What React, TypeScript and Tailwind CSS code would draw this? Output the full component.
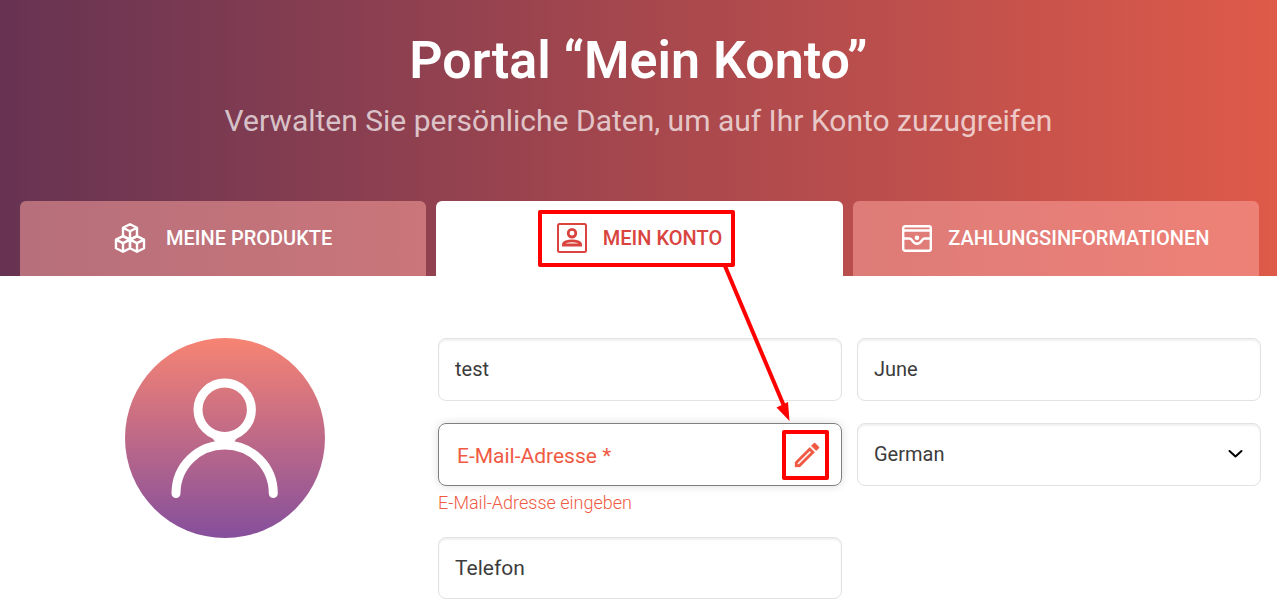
import React, { useState } from 'react';

const BoxesIcon: React.FC = () => (
    <svg width="32" height="32" viewBox="0 0 32 32" fill="none" stroke="currentColor" strokeWidth="2.4" strokeLinejoin="round" aria-hidden="true">
        <path d="M16 2.200 23 5.700v8.400l-7 3.500-7-3.500V5.700zM9 5.700l7 3.500 7-3.500M16 9.200v8.400" />
        <path d="M9 14.100l7 3.500v8.600l-7 3.500-7-3.500v-8.600zM2 17.600l7 3.500 7-3.500M9 21.100v8.600" />
        <path d="M23 14.100l7 3.500v8.600l-7 3.500-7-3.500v-8.600zM16 17.600l7 3.500 7-3.500M23 21.100v8.600" />
    </svg>
);

const AccountIcon: React.FC = () => (
    <svg width="30" height="30" viewBox="0 0 30 30" fill="none" stroke="currentColor" strokeWidth="2" aria-hidden="true">
        <rect x="1" y="1" width="28" height="28" rx="1.5" />
        <circle cx="15" cy="10.2" r="3.8" strokeWidth="2.8" />
        <path d="M6.4 22v-.5c0-2.200 4.300-3.700 8.600-3.700s8.600 1.500 8.600 3.700v.5z" strokeWidth="2.800" />
    </svg>
);

const WalletIcon: React.FC = () => (
    <svg width="30" height="30" viewBox="0 0 30 30" fill="none" stroke="currentColor" strokeWidth="2.400" aria-hidden="true">
        <rect x="1.200" y="3.200" width="27.600" height="24.600" rx="2" />
        <path d="M1 7.500h28M1 15.500h6.500c1.500 0 2.200 1 3 2.300 1 1.700 2.500 2.900 4.500 2.900s3.500-1.200 4.500-2.900c.8-1.300 1.500-2.300 3-2.300H29" />
        <circle cx="15" cy="14.800" r="2.300" fill="currentColor" stroke="none" />
    </svg>
);

const PencilIcon: React.FC = () => (
    <svg width="32" height="32" viewBox="0 0 24 24" fill="currentColor" stroke="currentColor" strokeWidth="0.2" aria-hidden="true">
        <path d="m14.060 9.020.92.920L5.920 19H5v-.92l9.060-9.060M17.660 3c-.25 0-.51.100-.7.290l-1.830 1.830 3.750 3.750 1.830-1.830a.996.996 0 0 0 0-1.410l-2.340-2.340c-.2-.2-.45-.290-.71-.290zm-3.600 3.190L3 17.250V21h3.750L17.810 9.940l-3.750-3.750z" />
    </svg>
);

const Avatar: React.FC = () => (
    <svg width="200" height="200" viewBox="0 0 200 200" fill="none" role="img" aria-label="Avatar">
        <defs>
            <linearGradient id="avatar" x1="0" y1="0" x2="0" y2="1">
                <stop offset="0" stopColor="#f78473" />
                <stop offset="1" stopColor="#854f9c" />
            </linearGradient>
        </defs>
        <circle cx="100" cy="100" r="100" fill="url(#avatar)" />
        <g stroke="#fff" strokeWidth="9" strokeLinecap="round">
            <circle cx="99.700" cy="71.700" r="26.700" />
            <path d="M51 155.500C51 128 73 107 99.700 107s48.600 21 48.600 48.500" />
        </g>
        <path d="M84 95.500h31.400l-6 8H90z" fill="#fff" />
    </svg>
);

// Red frame and arrow that lead from the active tab to the edit button
const TabMarker: React.FC = () => (
    <>
        <span className="absolute -top-[13px] -right-[13px] -bottom-[14px] -left-[19px] rounded-xs border-4 border-[#ff0000]" />
        <svg className="pointer-events-none absolute top-full left-full z-10 overflow-visible" width="70" height="170" viewBox="0 0 70 170" aria-hidden="true">
            <path d="M3 13 62 153" stroke="#ff0000" strokeWidth="4" />
            <path d="M67.500 168 54.500 154.500 66 149z" fill="#ff0000" />
        </svg>
    </>
);

const tabs = [
    { id: 'products', label: 'MEINE PRODUKTE', icon: <BoxesIcon />, gap: 'gap-5' },
    { id: 'account', label: 'MEIN KONTO', icon: <AccountIcon />, gap: 'gap-4' },
    { id: 'payment', label: 'ZAHLUNGSINFORMATIONEN', icon: <WalletIcon />, gap: 'gap-4' },
];

const fieldClass = 'w-full rounded-lg border border-[#e2e2e2] bg-white px-4 text-[#3c3c3c] shadow-[inset_0_2px_2px_rgba(0,0,0,0.06)] outline-none placeholder:text-[#3c3c3c]';

export default function App() {
    const [active, setActive] = useState('account');
    const [firstName, setFirstName] = useState('test');
    const [lastName, setLastName] = useState('June');
    const [email, setEmail] = useState('');
    const [language, setLanguage] = useState('German');
    const [phone, setPhone] = useState('');

    return (
        <div className="min-h-screen bg-white font-[Roboto,sans-serif]">
            <header className="bg-linear-to-r from-[#673352] via-[#a6474d] to-[#de5a49] pt-[29px] text-center">
                <h1 className="text-[52px] leading-16 font-semibold text-white">Portal “Mein Konto”</h1>
                <p className="mt-2 text-3xl leading-10 text-white/70">
                    Verwalten Sie persönliche Daten, um auf Ihr Konto zuzugreifen
                </p>
                <nav className="mt-[60px] grid grid-cols-3 gap-[10px] pr-[18px] pl-5">
                    {tabs.map((tab) => (
                        <button
                            key={tab.id}
                            type="button"
                            onClick={() => setActive(tab.id)}
                            className={`flex h-[75px] items-center justify-center rounded-t-md pb-[2px] text-xl font-medium ${
                                active === tab.id ? 'bg-white text-[#d9443f]' : 'bg-[#ffa7a1]/52 text-white'
                            }`}
                        >
                            <span className={`relative flex items-center ${tab.gap}`}>
                                {tab.icon}
                                {tab.label}
                                {tab.id === 'account' && <TabMarker />}
                            </span>
                        </button>
                    ))}
                </nav>
            </header>

            <main className="grid grid-cols-3 gap-[15px] pt-[62px] pr-4 pb-3 pl-[19px]">
                <div className="flex justify-center pl-2">
                    <Avatar />
                </div>
                <form className="col-span-2 grid grid-cols-2 items-start gap-x-[15px] gap-y-[22px]">
                    <input aria-label="Vorname" type="text" value={firstName} onChange={(e) => setFirstName(e.target.value)} className={`${fieldClass} h-[63px] pb-[2px] text-xl`} />
                    <input aria-label="Nachname" type="text" value={lastName} onChange={(e) => setLastName(e.target.value)} className={`${fieldClass} h-[63px] pb-[2px] text-xl`} />

                    <div>
                        <div className="flex h-[63px] items-center rounded-lg border border-[#808080] pr-3 pl-[18px] text-[21px] text-[#f05a43] shadow-[0_0_10px_rgba(0,0,0,0.14)]">
                            <label htmlFor="email" className="shrink-0 pt-1">E-Mail-Adresse *</label>
                            <input id="email" type="email" value={email} onChange={(e) => setEmail(e.target.value)} className="min-w-0 flex-1 px-2 outline-none" />
                            <button type="button" aria-label="Bearbeiten" className="flex h-[50px] w-[47px] items-center justify-center rounded-xs border-4 border-[#ff0000] pl-[2px]">
                                <PencilIcon />
                            </button>
                        </div>
                        <p className="mt-1 text-lg leading-[25px] font-[360] text-[#f05a43]">E-Mail-Adresse eingeben</p>
                    </div>

                    <div className="relative">
                        <select aria-label="Sprache" value={language} onChange={(e) => setLanguage(e.target.value)} className={`${fieldClass} h-[63px] appearance-none pb-[2px] text-xl`}>
                            <option>German</option>
                        </select>
                        <svg className="pointer-events-none absolute top-6 right-4" width="18" height="14" viewBox="0 0 18 14" fill="none" stroke="#000" strokeWidth="2" strokeLinecap="round" strokeLinejoin="round" aria-hidden="true">
                            <path d="m2.500 4 6 5.500 6-5.500" />
                        </svg>
                    </div>

                    <input aria-label="Telefon" type="tel" placeholder="Telefon" value={phone} onChange={(e) => setPhone(e.target.value)} className={`${fieldClass} h-[62px] text-[21px]`} />
                </form>
            </main>
        </div>
    );
}
